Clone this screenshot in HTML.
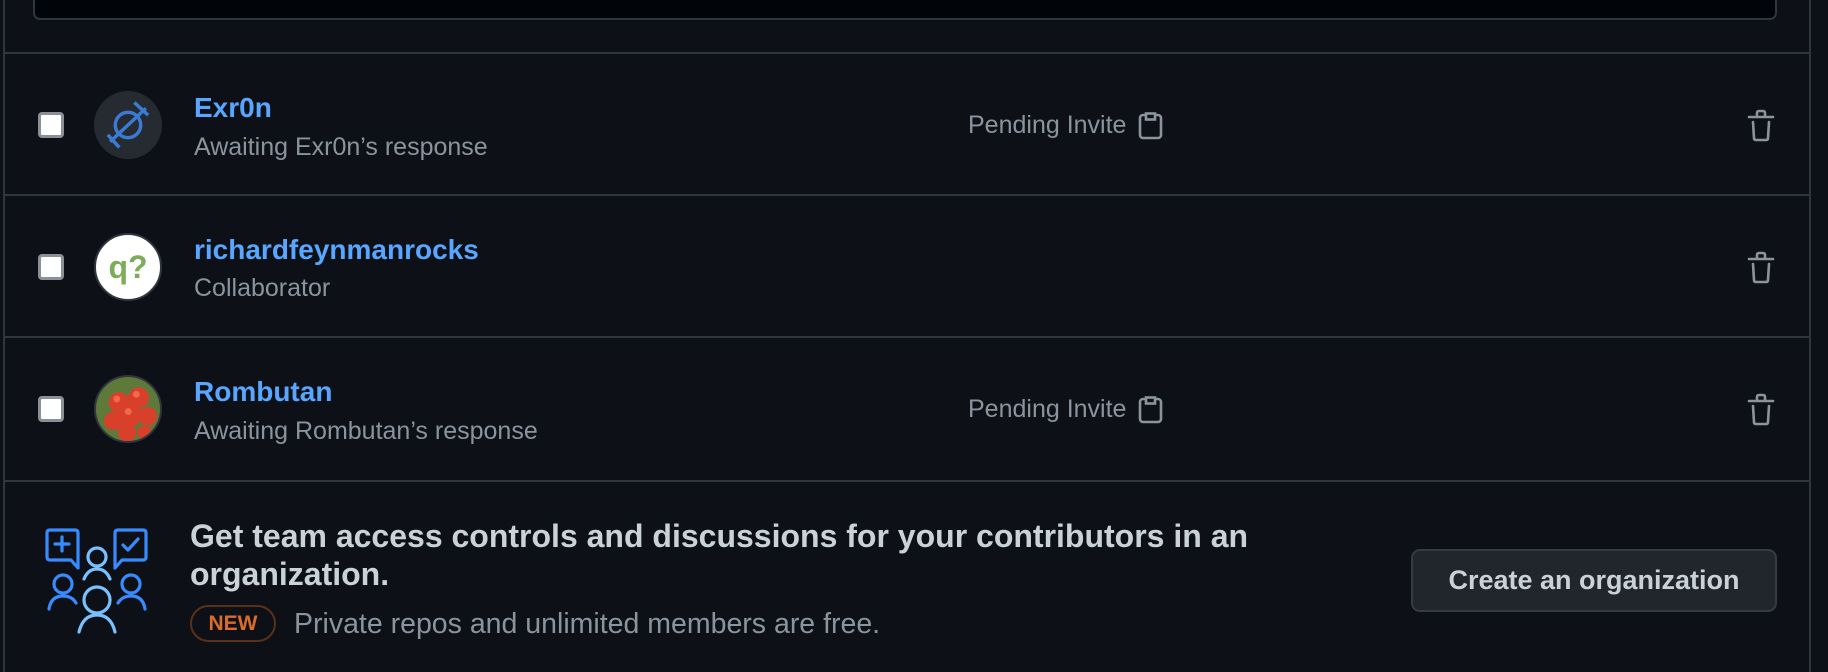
<!DOCTYPE html>
<html><head><meta charset="utf-8"><style>
*{margin:0;padding:0;box-sizing:border-box}
body{width:1828px;height:672px;background:#0d1117;overflow:hidden;position:relative;font-family:"Liberation Sans",sans-serif}
.abs{position:absolute}
.vl{position:absolute;top:0;bottom:0;width:2px;background:#30363d}
.hl{position:absolute;left:4px;width:1806px;height:2px;background:#30363d}
.cb{position:absolute;left:38px;width:26px;height:26px;background:#fff;border:3px solid #8b8f96;border-radius:4px}
.av{position:absolute;left:94px;width:68px;height:68px;border-radius:50%;overflow:hidden}
.name{position:absolute;left:194px;color:#58a6ff;font-weight:bold;font-size:28px;white-space:nowrap;line-height:32px}
.sub{position:absolute;left:194px;color:#8b949e;font-size:25px;white-space:nowrap;line-height:30px}
.pend{position:absolute;left:968px;color:#8b949e;font-size:25px;white-space:nowrap;line-height:30px}
</style></head><body>
<div class="vl" style="left:3px"></div>
<div class="vl" style="left:1809px"></div>
<div class="abs" style="left:33px;top:-20px;width:1744px;height:40px;border:2px solid #30363d;border-radius:7px;background:#010409"></div>
<div class="hl" style="top:52px"></div>
<div class="hl" style="top:194px"></div>
<div class="hl" style="top:336px"></div>
<div class="hl" style="top:480px"></div>

<!-- row 1 -->
<div class="cb" style="top:112px"></div>
<div class="av" style="top:91px;background:#262a31">
<svg width="68" height="68" viewBox="0 0 59 59"><g stroke="#3b7bd4" stroke-width="3" fill="none"><circle cx="29.5" cy="29.5" r="11"/><line x1="14" y1="44" x2="45" y2="15"/><line x1="12" y1="38" x2="22" y2="49"/><line x1="35" y1="10" x2="47" y2="21"/></g></svg>
</div>
<div class="name" style="top:92px">Exr0n</div>
<div class="sub" style="top:132px">Awaiting Exr0n’s response</div>
<div class="pend" style="top:110px">Pending Invite</div>
<svg class="abs" style="left:1138px;top:112px" width="26" height="28" viewBox="0 0 26 28"><rect x="2" y="3" width="21" height="23" rx="3" fill="none" stroke="#8b949e" stroke-width="2.6"/><rect x="8" y="1.5" width="9" height="6" fill="#0d1117" stroke="#8b949e" stroke-width="2.6"/></svg>

<!-- row 2 -->
<div class="cb" style="top:254px"></div>
<div class="av" style="top:233px;background:#fff;border:2px solid #30363d;display:flex;align-items:center;justify-content:center"><span style="color:#7bad5a;font-weight:bold;font-size:32px">q?</span></div>
<div class="name" style="top:234px">richardfeynmanrocks</div>
<div class="sub" style="top:273px">Collaborator</div>

<!-- row 3 -->
<div class="cb" style="top:396px"></div>
<div class="av" style="top:375px;background:#5d7a3a;border:2px solid #30363d">
<svg width="68" height="68" viewBox="0 0 59 59"><g fill="#d8402b"><circle cx="20" cy="22" r="9"/><circle cx="37" cy="18" r="9"/><circle cx="30" cy="33" r="10"/><circle cx="15" cy="38" r="8"/><circle cx="45" cy="34" r="8"/><circle cx="27" cy="48" r="8"/><circle cx="42" cy="48" r="6"/></g><g fill="#f06a4a"><circle cx="18" cy="19" r="3"/><circle cx="35" cy="15" r="3"/><circle cx="28" cy="30" r="3"/></g></svg>
</div>
<div class="name" style="top:376px">Rombutan</div>
<div class="sub" style="top:416px">Awaiting Rombutan’s response</div>
<div class="pend" style="top:394px">Pending Invite</div>
<svg class="abs" style="left:1138px;top:396px" width="26" height="28" viewBox="0 0 26 28"><rect x="2" y="3" width="21" height="23" rx="3" fill="none" stroke="#8b949e" stroke-width="2.6"/><rect x="8" y="1.5" width="9" height="6" fill="#0d1117" stroke="#8b949e" stroke-width="2.6"/></svg>

<!-- trash icons -->
<svg class="abs" style="left:1746px;top:109px" width="30" height="34" viewBox="0 0 30 34"><g fill="none" stroke="#8b949e" stroke-width="2.6" stroke-linecap="round" stroke-linejoin="round"><path d="M3 8H27"/><path d="M11 7V4Q11 2 13 2H17Q19 2 19 4V7"/><path d="M7 13L8 29Q8 31 10 31H20Q22 31 22 29L23 13"/></g></svg>
<svg class="abs" style="left:1746px;top:251px" width="30" height="34" viewBox="0 0 30 34"><g fill="none" stroke="#8b949e" stroke-width="2.6" stroke-linecap="round" stroke-linejoin="round"><path d="M3 8H27"/><path d="M11 7V4Q11 2 13 2H17Q19 2 19 4V7"/><path d="M7 13L8 29Q8 31 10 31H20Q22 31 22 29L23 13"/></g></svg>
<svg class="abs" style="left:1746px;top:393px" width="30" height="34" viewBox="0 0 30 34"><g fill="none" stroke="#8b949e" stroke-width="2.6" stroke-linecap="round" stroke-linejoin="round"><path d="M3 8H27"/><path d="M11 7V4Q11 2 13 2H17Q19 2 19 4V7"/><path d="M7 13L8 29Q8 31 10 31H20Q22 31 22 29L23 13"/></g></svg>

<!-- footer -->
<svg class="abs" style="left:44px;top:527px" width="106" height="108" viewBox="0 0 106 108"><g fill="none" stroke-width="3.2" stroke-linecap="round" stroke-linejoin="round">
<g stroke="#388bfd"><path d="M6 3H31Q34 3 34 6V41L27 33H6Q3 33 3 30V6Q3 3 6 3Z"/><path d="M18 10V24M11 17H25"/><path d="M99 3H74Q71 3 71 6V41L78 33H99Q102 33 102 30V6Q102 3 99 3Z"/><path d="M79 18L84 23L94 12"/>
<circle cx="19" cy="57" r="9"/><path d="M5 82Q7 69 19 69Q28 69 32 76"/><circle cx="87" cy="57" r="9"/><path d="M101 82Q99 69 87 69Q78 69 74 76"/></g>
<g stroke="#79c0ff"><circle cx="53" cy="30" r="9"/><path d="M40 52Q44 42 53 42Q62 42 66 52"/><circle cx="53" cy="73" r="13"/><path d="M35 105Q39 88 53 88Q67 88 71 105"/></g></g></svg>
<div class="abs" style="left:190px;top:517px;width:1160px;color:#c9d1d9;font-weight:bold;font-size:32px;line-height:38px">Get team access controls and discussions for your contributors in an organization.</div>
<div class="abs" style="left:190px;top:605px;width:86px;height:37px;border:2px solid #5a3116;border-radius:19px;color:#db6d28;font-weight:bold;font-size:21px;line-height:33px;text-align:center">NEW</div>
<div class="abs" style="left:294px;top:607px;color:#8b949e;font-size:28.5px;line-height:34px;white-space:nowrap">Private repos and unlimited members are free.</div>
<div class="abs" style="left:1411px;top:549px;width:366px;height:63px;background:#21262d;border:2px solid #363b42;border-radius:9px;color:#c9d1d9;font-weight:bold;font-size:27px;line-height:59px;text-align:center;white-space:nowrap">Create an organization</div>
</body></html>
